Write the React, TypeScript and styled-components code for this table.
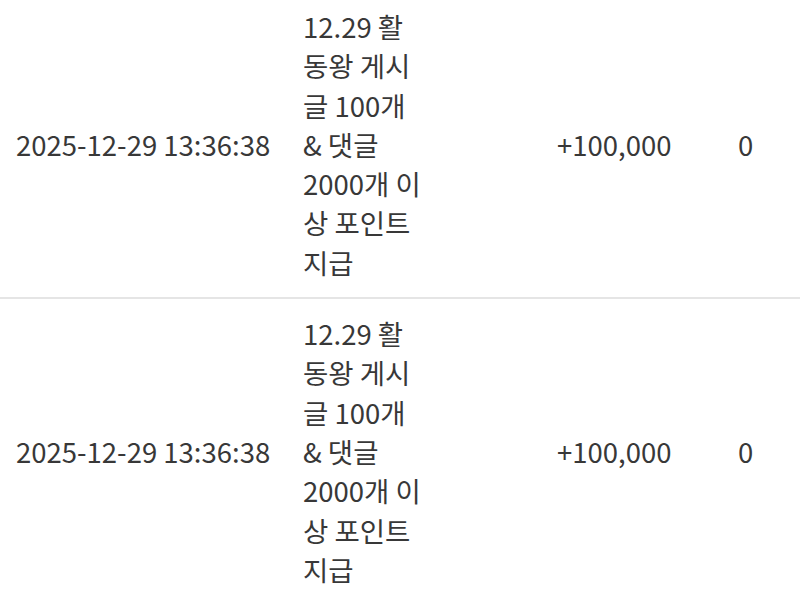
import React from "react";
import styled, { createGlobalStyle } from "styled-components";

const GlobalStyle = createGlobalStyle`
  html, body {
    margin: 0;
    padding: 0;
    background: #ffffff;
  }
  body {
    font-family: "Noto Sans CJK KR", "Noto Sans", sans-serif;
    color: #383838;
  }
`;

const Table = styled.div`
  margin-top: -8px;
  width: 800px;
`;

const Row = styled.div`
  display: grid;
  grid-template-columns: 287px 254px 181px 1fr;
  align-items: center;
  padding: 15px 0;
  border-bottom: 2px solid #e5e5e5;
  font-size: 27.5px;
  font-weight: 400;
  line-height: 39.3px;
`;

const Cell = styled.div`
  padding: 0 16px;
  white-space: nowrap;
`;

const Desc = styled.div`
  width: 120px;
  white-space: normal;
  word-break: normal;
`;

type Entry = { date: string; desc: string; amount: string; balance: string };

const entries: Entry[] = [
  {
    date: "2025-12-29 13:36:38",
    desc: "12.29 활동왕 게시글 100개 & 댓글 2000개 이상 포인트 지급",
    amount: "+100,000",
    balance: "0",
  },
  {
    date: "2025-12-29 13:36:38",
    desc: "12.29 활동왕 게시글 100개 & 댓글 2000개 이상 포인트 지급",
    amount: "+100,000",
    balance: "0",
  },
];

export default function App() {
  return (
    <>
      <GlobalStyle />
      <Table>
        {entries.map((e, i) => (
          <Row key={i}>
            <Cell>{e.date}</Cell>
            <Cell>
              <Desc>{e.desc}</Desc>
            </Cell>
            <Cell>{e.amount}</Cell>
            <Cell>{e.balance}</Cell>
          </Row>
        ))}
      </Table>
    </>
  );
}
